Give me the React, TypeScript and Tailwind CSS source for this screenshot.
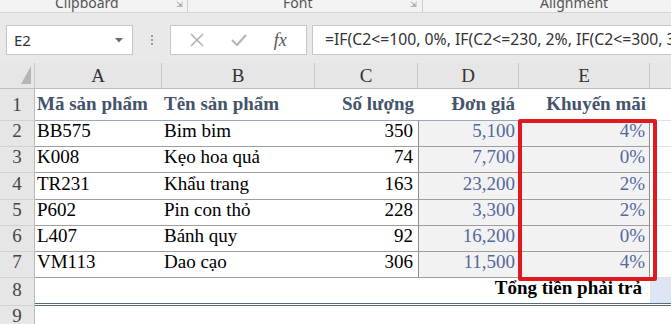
import { ChevronDown } from "lucide-react";

const serif = { fontFamily: '"Liberation Serif", "Times New Roman", serif' };

const rows = [
  { n: 2, code: "BB575", name: "Bim bim", qty: "350", price: "5,100", promo: "4%" },
  { n: 3, code: "K008", name: "Kẹo hoa quả", qty: "74", price: "7,700", promo: "0%" },
  { n: 4, code: "TR231", name: "Khẩu trang", qty: "163", price: "23,200", promo: "2%" },
  { n: 5, code: "P602", name: "Pin con thỏ", qty: "228", price: "3,300", promo: "2%" },
  { n: 6, code: "L407", name: "Bánh quy", qty: "92", price: "16,200", promo: "0%" },
  { n: 7, code: "VM113", name: "Dao cạo", qty: "306", price: "11,500", promo: "4%" },
];

function RowHead({ n }: { n: number }) {
  return (
    <div className="w-[35px] shrink-0 bg-[#e6e6e6] border-r border-r-[#b9b9b9] border-b border-b-[#d2d2d2] flex items-end justify-center pb-[1px] text-[#444]">
      {n}
    </div>
  );
}

export default function App() {
  return (
    <div className="w-[671px] h-[324px] overflow-hidden bg-white" style={{ fontFamily: '"Noto Sans", "Open Sans", sans-serif' }}>
      {/* ribbon group labels */}
      <div className="relative h-[13px] bg-[#f3f3f3] border-b border-[#d6d6d6] overflow-hidden text-[14px] text-[#555]">
        <span className="absolute left-[55px] top-[-8px]">Clipboard</span>
        <span className="absolute left-[176px] top-[-2px] text-[8px] text-[#888]">⇲</span>
        <span className="absolute left-[187px] top-0 h-[12px] border-l border-[#cfcfcf]" />
        <span className="absolute left-[283px] top-[-8px]">Font</span>
        <span className="absolute left-[410px] top-[-2px] text-[8px] text-[#888]">⇲</span>
        <span className="absolute left-[422px] top-0 h-[12px] border-l border-[#cfcfcf]" />
        <span className="absolute left-[540px] top-[-8px]">Alignment</span>
      </div>

      {/* formula bar */}
      <div className="h-[50px] bg-[#e9e9e9] flex items-start pt-[12px]">
        <div className="ml-[6px] w-[127px] h-[30px] bg-white border border-[#c6c6c6] flex items-center justify-between pl-[7px] pr-[6px] text-[15px] text-[#333]">
          <span>E2</span>
          <svg width="8" height="5" viewBox="0 0 8 5" className="mr-[3px]">
            <path d="M0 0 L8 0 L4 4.5 Z" fill="#6b6b6b" />
          </svg>
        </div>
        <div className="w-[37px] h-[30px] flex flex-col items-center justify-center gap-[2px]">
          <span className="w-[2px] h-[2px] bg-[#9a9a9a]" />
          <span className="w-[2px] h-[2px] bg-[#9a9a9a]" />
          <span className="w-[2px] h-[2px] bg-[#9a9a9a]" />
        </div>
        <div className="w-[137px] h-[30px] bg-white border border-[#c6c6c6] flex items-center justify-around px-[6px]">
          <svg width="14" height="14" viewBox="0 0 14 14">
            <path d="M1 1 L13 13 M13 1 L1 13" stroke="#b3b3b3" strokeWidth="1.6" />
          </svg>
          <svg width="16" height="12" viewBox="0 0 16 12">
            <path d="M1 6 L6 11 L15 1" stroke="#b3b3b3" strokeWidth="2" fill="none" />
          </svg>
          <span className="italic text-[18px] text-[#555] leading-none" style={serif}>
            fx
          </span>
        </div>
        <div className="ml-[5px] flex-1 h-[30px] bg-white border border-r-0 border-[#c6c6c6] flex items-center pl-[12px] text-[15.75px] text-[#333] whitespace-nowrap overflow-hidden">
          =IF(C2&lt;=100, 0%, IF(C2&lt;=230, 2%, IF(C2&lt;=300, 3%, 4%)))
        </div>
      </div>

      {/* sheet */}
      <div className="relative text-[19px] text-black" style={serif}>
        {/* column headers */}
        <div className="flex h-[26px] bg-[#e6e6e6] border-b border-[#bdbdbd] text-[#333]">
          <div className="w-[35px] shrink-0 border-r border-[#c9c9c9] flex items-end justify-end pr-[3px] pb-[4px]">
            <svg width="10" height="18" viewBox="0 0 10 18">
              <path d="M10 0 L10 18 L0 18 Z" fill="#b5b5b5" />
            </svg>
          </div>
          {[
            ["A", "w-[127px]"],
            ["B", "w-[153px]"],
            ["C", "w-[103px]"],
            ["D", "w-[101px]"],
            ["E", "w-[131px]"],
          ].map(([l, w]) => (
            <div key={l} className={`${w} shrink-0 border-r border-[#c9c9c9] flex items-center justify-center pt-[2px]`}>
              {l}
            </div>
          ))}
          <div className="flex-1" />
        </div>

        {/* row 1 */}
        <div className="flex h-[32px]">
          <RowHead n={1} />
          <div className="flex border-b border-[#9aa8bd] font-bold text-[#44546a]">
            <div className="w-[127px] flex items-end pl-[2px] pb-[2px] whitespace-nowrap">Mã sản phẩm</div>
            <div className="w-[153px] flex items-end pl-[2px] pb-[2px] whitespace-nowrap">Tên sản phẩm</div>
            <div className="w-[103px] flex items-end justify-end pr-[4px] pb-[2px] whitespace-nowrap">Số lượng</div>
            <div className="w-[101px] flex items-end justify-end pr-[4px] pb-[2px] whitespace-nowrap">Đơn giá</div>
            <div className="w-[131px] flex items-end justify-end pr-[4px] pb-[2px] whitespace-nowrap">Khuyến mãi</div>
          </div>
          <div className="flex-1 border-b border-[#e1e1e1]" />
        </div>

        {/* data rows */}
        {rows.map((r) => (
          <div key={r.n} className={`flex ${r.n === 4 ? "h-[27px]" : "h-[26px]"}`}>
            <RowHead n={r.n} />
            <div className="flex border-b border-[#9e9e9e]">
              <div className="w-[127px] flex items-end pl-[2px] pb-[1px]">{r.code}</div>
              <div className="w-[153px] flex items-end pl-[2px] pb-[1px] whitespace-nowrap">{r.name}</div>
              <div className="w-[103px] flex items-end justify-end pr-[5px] pb-[1px]">{r.qty}</div>
              <div className="w-[101px] bg-[#f2f2f2] border-l border-[#8c8c8c] flex items-end justify-end pr-[4px] pb-[1px] text-[#5468a0]">
                {r.price}
              </div>
              <div className="w-[131px] bg-[#f2f2f2] border-l border-r border-[#8c8c8c] flex items-end justify-end pr-[4px] pb-[1px] text-[#5468a0]">
                {r.promo}
              </div>
            </div>
            <div className="flex-1 border-b border-[#e1e1e1]" />
          </div>
        ))}

        {/* row 8 */}
        <div className="flex h-[28px]">
          <RowHead n={8} />
          <div className="flex flex-1 border-b-[3px] border-double border-[#5b6b82]">
            <div className="w-[615px] flex items-end justify-end pr-[8px] pb-[1px] font-bold whitespace-nowrap">
              Tổng tiền phải trả
            </div>
            <div className="flex-1 bg-[#dde6f4]" />
          </div>
        </div>

        {/* row 9 */}
        <div className="flex h-[26px]">
          <RowHead n={9} />
          <div className="flex-1" />
        </div>

        {/* highlight box */}
        <div className="absolute left-[518px] top-[56px] w-[139px] h-[162px] border-[4px] border-[#e0191e] rounded-[2px]" />
      </div>
    </div>
  );
}
